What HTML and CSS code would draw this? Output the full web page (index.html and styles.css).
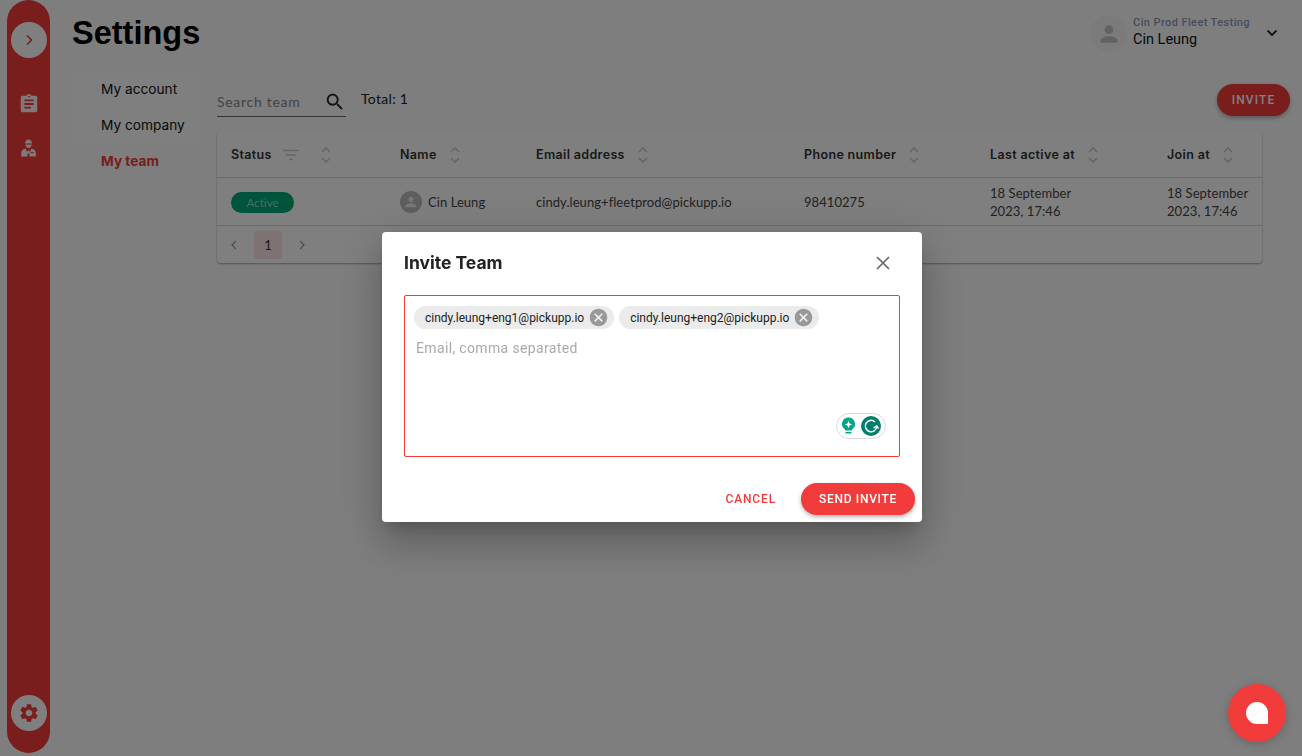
FILE: index.html
```html
<!DOCTYPE html>
<html lang="en">
<head>
    <meta charset="UTF-8">
    <meta name="viewport" content="width=device-width, initial-scale=1.0">
    <title>Settings</title>
    <link rel="stylesheet" href="styles.css">
</head>
<body>
    <svg class="defs" width="0" height="0">
        <symbol id="sort" viewBox="0 0 12 18">
            <path d="M2 6l4-4 4 4M2 12l4 4 4-4" fill="none" stroke="currentColor" stroke-width="1.6"/>
        </symbol>
        <symbol id="cancel" viewBox="0 0 24 24">
            <path d="M12 2C6.47 2 2 6.47 2 12s4.47 10 10 10 10-4.47 10-10S17.53 2 12 2zm5 13.59L15.59 17 12 13.41 8.41 17 7 15.59 10.59 12 7 8.41 8.41 7 12 10.59 15.59 7 17 8.41 13.41 12 17 15.59z" fill="currentColor"/>
        </symbol>
        <symbol id="person" viewBox="0 0 24 24">
            <path d="M12 12c2.21 0 4-1.79 4-4s-1.79-4-4-4-4 1.79-4 4 1.79 4 4 4zm0 2c-2.67 0-8 1.34-8 4v2h16v-2c0-2.66-5.33-4-8-4z" fill="currentColor"/>
        </symbol>
    </svg>

    <div class="page">
        <aside class="sidebar">
            <button class="side-btn">
                <svg width="12" height="12" viewBox="0 0 12 12"><path d="M4 1.5L8.5 6 4 10.5" fill="none" stroke="currentColor" stroke-width="1.6"/></svg>
            </button>
            <svg class="side-icon" width="22" height="22" viewBox="0 0 24 24"><path d="M19 3h-4.18C14.4 1.84 13.3 1 12 1c-1.3 0-2.4.84-2.82 2H5c-1.1 0-2 .9-2 2v14c0 1.1.9 2 2 2h14c1.1 0 2-.9 2-2V5c0-1.1-.9-2-2-2zm-7 0c.55 0 1 .45 1 1s-.45 1-1 1-1-.45-1-1 .45-1 1-1zm2 14H7v-2h7v2zm3-4H7v-2h10v2zm0-4H7V7h10v2z" fill="currentColor"/></svg>
            <svg class="side-icon worker" width="15" height="18" viewBox="0 0 15 18"><path d="M4 4.600C4 2.300 5.500.6 7.500.6S11 2.300 11 4.600zM4.400 5.500h6.200c-.1 2-1.300 3.500-3.100 3.500S4.500 7.500 4.400 5.500zM4.600 9.500l1.400 3.500 1.500-2 1.500 2 1.400-3.500c2.300.5 4 1.800 4.300 3.800l.3 4.200H8.500v-3H6.500v3H0l.3-4.200c.3-2 2-3.300 4.300-3.800z" fill="currentColor"/><path d="M9.500 13.600h3.200" stroke="#f23b3b" stroke-width="1"/></svg>
            <button class="side-btn side-bottom">
                <svg width="22" height="22" viewBox="0 0 24 24"><path d="M19.14 12.940c.04-.3.06-.61.06-.94 0-.32-.02-.64-.07-.94l2.030-1.580c.18-.14.23-.41.12-.61l-1.920-3.320c-.12-.22-.37-.29-.59-.22l-2.390.96c-.5-.38-1.030-.7-1.620-.94l-.36-2.540c-.04-.24-.24-.41-.48-.41h-3.840c-.24 0-.43.17-.47.41l-.36 2.540c-.59.24-1.130.57-1.620.94l-2.390-.96c-.22-.08-.47 0-.59.22L2.740 8.870c-.12.21-.08.47.12.61l2.030 1.580c-.05.3-.09.63-.09.94s.02.64.07.94l-2.030 1.580c-.18.14-.23.41-.12.61l1.920 3.320c.12.22.37.29.59.22l2.390-.96c.5.38 1.030.7 1.620.94l.36 2.540c.05.24.24.41.48.41h3.840c.24 0 .44-.17.47-.41l.36-2.540c.59-.24 1.130-.56 1.620-.94l2.390.96c.22.08.47 0 .59-.22l1.920-3.320c.12-.22.07-.47-.12-.61l-2.010-1.580zM12 15.600c-1.980 0-3.600-1.620-3.600-3.600s1.620-3.600 3.600-3.600 3.600 1.620 3.600 3.600-1.620 3.600-3.600 3.600z" fill="currentColor"/></svg>
            </button>
        </aside>

        <main class="main">
            <header class="topbar">
                <h1>Settings</h1>
                <div class="user">
                    <span class="user-avatar"><svg width="26" height="26"><use href="#person"/></svg></span>
                    <div class="user-text">
                        <div class="user-org">Cin Prod Fleet Testing</div>
                        <div class="user-name">Cin Leung</div>
                    </div>
                    <svg class="user-caret" width="12" height="8" viewBox="0 0 12 8"><path d="M1.500 1.500L6 6l4.500-4.500" fill="none" stroke="currentColor" stroke-width="1.700"/></svg>
                </div>
            </header>

            <div class="body">
                <nav class="menu">
                    <a class="menu-item">My account</a>
                    <a class="menu-item">My company</a>
                    <a class="menu-item active">My team</a>
                </nav>

                <section class="content">
                    <div class="toolbar">
                        <div class="search">
                            <span>Search team</span>
                            <svg width="22" height="22" viewBox="0 0 24 24"><path d="M15.500 14h-.79l-.28-.27C15.410 12.590 16 11.110 16 9.500 16 5.910 13.090 3 9.500 3S3 5.910 3 9.500 5.910 16 9.500 16c1.610 0 3.090-.59 4.230-1.570l.27.28v.79l5 4.990L20.490 19l-4.990-5zm-6 0C7.010 14 5 11.990 5 9.500S7.010 5 9.500 5 14 7.010 14 9.500 11.990 14 9.500 14z" fill="currentColor"/></svg>
                        </div>
                        <span class="total">Total: 1</span>
                        <button class="btn-invite">INVITE</button>
                    </div>

                    <div class="card">
                        <div class="row head">
                            <div class="th">Status
                                <svg class="filter" width="18" height="12" viewBox="0 0 18 12"><path d="M1 1.500h16M4 6h10M7 10.500h4" stroke="currentColor" stroke-width="1.500"/></svg>
                                <svg class="sort sort-status" width="12" height="18"><use href="#sort"/></svg>
                            </div>
                            <div class="th">Name <svg class="sort" width="12" height="18"><use href="#sort"/></svg></div>
                            <div class="th">Email address <svg class="sort" width="12" height="18"><use href="#sort"/></svg></div>
                            <div class="th">Phone number <svg class="sort" width="12" height="18"><use href="#sort"/></svg></div>
                            <div class="th">Last active at <svg class="sort" width="12" height="18"><use href="#sort"/></svg></div>
                            <div class="th">Join at <svg class="sort" width="12" height="18"><use href="#sort"/></svg></div>
                        </div>
                        <div class="row cells">
                            <div><span class="badge">Active</span></div>
                            <div class="name-cell">
                                <span class="row-avatar"><svg width="16" height="16"><use href="#person"/></svg></span>
                                Cin Leung
                            </div>
                            <div>cindy.leung+fleetprod@pickupp.io</div>
                            <div>98410275</div>
                            <div>18 September<br>2023, 17:46</div>
                            <div>18 September<br>2023, 17:46</div>
                        </div>
                        <div class="pager">
                            <svg width="10" height="10" viewBox="0 0 10 10"><path d="M7 1L3 5l4 4" fill="none" stroke="currentColor" stroke-width="1.200"/></svg>
                            <span class="page-num">1</span>
                            <svg width="10" height="10" viewBox="0 0 10 10"><path d="M3 1l4 4-4 4" fill="none" stroke="currentColor" stroke-width="1.200"/></svg>
                        </div>
                    </div>
                </section>
            </div>
        </main>
    </div>

    <div class="overlay">
        <div class="dialog">
            <div class="dialog-title">
                <h2>Invite Team</h2>
                <svg width="14" height="14" viewBox="0 0 14 14"><path d="M1 1l12 12M13 1L1 13" stroke="currentColor" stroke-width="1.700"/></svg>
            </div>
            <div class="email-box">
                <div class="chips">
                    <span class="chip">cindy.leung+eng1@pickupp.io <svg width="21" height="21"><use href="#cancel"/></svg></span>
                    <span class="chip">cindy.leung+eng2@pickupp.io <svg width="21" height="21"><use href="#cancel"/></svg></span>
                </div>
                <div class="placeholder">Email, comma separated</div>
                <div class="grammarly">
                    <svg width="15" height="18" viewBox="0 0 15 18"><path d="M7.500 0.500a6.500 6.500 0 0 1 3.500 12v1H4v-1a6.500 6.500 0 0 1 3.500-12z" fill="#00a88a"/><path d="M4.500 15h6v1.500h-6z" fill="#00a88a"/><path d="M7.500 3.800l1 2.700 2.700 1-2.700 1-1 2.700-1-2.700-2.700-1 2.700-1z" fill="#fff"/></svg>
                    <svg width="20" height="20" viewBox="0 0 20 20"><circle cx="10" cy="10" r="10" fill="#027e6f"/><path d="M14 6A5.700 5.700 0 1 0 15.700 10.500" fill="none" stroke="#fff" stroke-width="1.500"/><path d="M12.500 12l3.300-2.200 1.800 2.800" fill="none" stroke="#fff" stroke-width="1.300"/></svg>
                </div>
            </div>
            <div class="dialog-actions">
                <button class="btn-cancel">CANCEL</button>
                <button class="btn-send">SEND INVITE</button>
            </div>
        </div>
    </div>

    <button class="chat-fab"><span class="chat-drop"></span></button>
</body>
</html>
```

FILE: styles.css
```css
* {
    box-sizing: border-box;
}
html, body {
    margin: 0;
    height: 100%;
    overflow: hidden;
}
body {
    font-family: "Inter", "Liberation Sans", sans-serif;
    background-color: #fff;
    color: #000;
}
button {
    border: none;
    cursor: pointer;
    font-family: "Roboto", sans-serif;
}
.defs {
    position: absolute;
}

/* page under the overlay */
.page {
    display: flex;
    height: 756px;
    padding-left: 7px;
    background-color: #fcfcfc;
}
.sidebar {
    width: 43px;
    height: 753px;
    flex-shrink: 0;
    display: flex;
    flex-direction: column;
    align-items: center;
    padding: 22px 0;
    border-radius: 22px;
    background-color: #f23b3b;
    color: #fff;
}
.side-btn {
    width: 36px;
    height: 36px;
    padding: 0;
    display: flex;
    align-items: center;
    justify-content: center;
    border-radius: 50%;
    background-color: #fff;
    color: #f23b3b;
}
.side-icon {
    margin-top: 35px;
    color: #fff;
    opacity: .95;
}
.side-icon.worker {
    margin-top: 24px;
}
.side-bottom {
    margin-top: auto;
}
.main {
    flex: 1;
    padding: 0 12px 0 22px;
}
.topbar {
    height: 72px;
    display: flex;
    align-items: center;
    justify-content: space-between;
}
h1 {
    margin: 0 0 6px;
    font-family: "Liberation Sans", sans-serif;
    font-size: 32.500px;
    font-weight: 700;
}
.user {
    display: flex;
    align-items: center;
    margin: 0 12px 6px 0;
}
.user-avatar {
    width: 37px;
    height: 37px;
    margin-top: 1px;
    display: flex;
    align-items: center;
    justify-content: center;
    border-radius: 50%;
    background-color: #f7f7f7;
    color: #c4c4c4;
}
.user-text {
    margin-left: 6px;
    font-family: "Roboto", sans-serif;
}
.user-org {
    font-size: 11px;
    font-weight: 500;
    line-height: 14px;
    letter-spacing: .4px;
    color: #8e9cb8;
}
.user-name {
    font-size: 14.500px;
    line-height: 20px;
    color: #111;
}
.user-caret {
    margin-left: 16px;
}
.body {
    display: flex;
    gap: 18px;
}
.menu {
    width: 127px;
    height: 72px;
    flex-shrink: 0;
    background-color: #fff;
}
.menu-item {
    display: block;
    height: 36px;
    padding-left: 29px;
    font-size: 13.700px;
    line-height: 34px;
    color: #111;
}
.menu-item.active {
    font-weight: 700;
    color: #f23b3b;
}
.content {
    flex: 1;
}
.toolbar {
    height: 60px;
    padding-top: 12px;
    display: flex;
    align-items: flex-start;
}
.search {
    width: 129px;
    height: 33px;
    padding-top: 3px;
    display: flex;
    align-items: center;
    justify-content: space-between;
    border-bottom: 1px solid #666;
    font-family: "Lato", sans-serif;
    font-size: 14px;
    letter-spacing: .7px;
    color: #888;
}
.search svg {
    color: #222;
}
.total {
    margin: 6px 0 0 15px;
    font-family: "Lato", sans-serif;
    font-size: 14px;
    letter-spacing: .3px;
    color: #222;
}
.btn-invite {
    width: 73px;
    height: 32px;
    margin-left: auto;
    border-radius: 16px;
    background-color: #f23b3b;
    color: #fff;
    font-size: 12px;
    font-weight: 500;
    letter-spacing: 1.100px;
    box-shadow: 0 2px 4px rgba(0, 0, 0, .3);
}
.card {
    margin-right: 28px;
    border-radius: 4px;
    background-color: #fff;
    box-shadow: 0 1px 2px rgba(0, 0, 0, .35);
}
.row {
    display: grid;
    grid-template-columns: 169px 136px 268px 186px 177px 1fr;
    padding-left: 14px;
    align-items: center;
    border-bottom: 1px solid #d8d8d8;
}
.head {
    height: 46px;
}
.cells {
    height: 48px;
    padding-top: 1px;
    font-family: "Lato", sans-serif;
    font-size: 13px;
    line-height: 18px;
    letter-spacing: .06px;
    color: #444;
}
.th {
    display: flex;
    align-items: center;
    font-size: 12.500px;
    font-weight: 600;
    letter-spacing: .35px;
    color: #333;
}
.sort {
    margin-left: 12px;
    color: #ccc;
}
.filter {
    margin-left: 10px;
    color: #ccc;
}
.sort-status {
    margin-left: 20px;
}
.badge {
    display: inline-block;
    width: 63px;
    height: 21px;
    border-radius: 11px;
    background-color: #00a878;
    color: #8fdcc0;
    font-size: 11.500px;
    line-height: 21px;
    text-align: center;
    vertical-align: middle;
}
.name-cell {
    display: flex;
    align-items: center;
    gap: 6px;
}
.row-avatar {
    width: 22px;
    height: 22px;
    display: flex;
    align-items: center;
    justify-content: center;
    border-radius: 50%;
    background-color: #bdbdbd;
    color: #eee;
}
.pager {
    height: 37px;
    padding-left: 12px;
    display: flex;
    align-items: center;
    gap: 15px;
    color: #999;
}
.page-num {
    width: 28px;
    height: 28px;
    border-radius: 3px;
    background-color: #ffe4e4;
    color: #333;
    font-family: "Lato", sans-serif;
    font-size: 13px;
    line-height: 28px;
    text-align: center;
}

/* dialog */
.overlay {
    position: fixed;
    inset: 0;
    display: flex;
    align-items: center;
    justify-content: center;
    padding: 0 0 2px 2px;
    background-color: rgba(0, 0, 0, .5);
}
.dialog {
    width: 540px;
    height: 290px;
    padding: 0 7px 0 22px;
    border-radius: 4px;
    background-color: #fff;
    box-shadow: 0 11px 15px -7px rgba(0, 0, 0, .2), 0 24px 38px 3px rgba(0, 0, 0, .14), 0 9px 46px 8px rgba(0, 0, 0, .12);
}
.dialog-title {
    height: 63px;
    padding: 0 25px 2px 0;
    display: flex;
    align-items: center;
    justify-content: space-between;
    color: #666;
}
h2 {
    margin: 0;
    font-size: 17.500px;
    font-weight: 700;
    color: #222;
}
.email-box {
    position: relative;
    width: 496px;
    height: 162px;
    padding: 10px 9px;
    border: 1px solid #f23b3b;
    border-radius: 2px;
}
.chips {
    display: flex;
    gap: 5px;
}
.chip {
    height: 23px;
    padding: 0 5px 0 11px;
    display: flex;
    align-items: center;
    gap: 4px;
    border-radius: 12px;
    background-color: #ebebeb;
    color: #222;
    font-family: "Roboto", sans-serif;
    font-size: 12px;
}
.chip svg {
    color: #999;
}
.placeholder {
    margin: 11px 0 0 2px;
    font-family: "Roboto", sans-serif;
    font-size: 14px;
    line-height: 16px;
    letter-spacing: .35px;
    color: #aaa;
}
.grammarly {
    position: absolute;
    right: 13px;
    bottom: 17px;
    width: 50px;
    height: 26px;
    display: flex;
    align-items: center;
    justify-content: center;
    gap: 5px;
    border: 1px solid #d5d9e0;
    border-radius: 13px;
    background-color: #fff;
}
.dialog-actions {
    margin-top: 26px;
    display: flex;
    align-items: center;
    justify-content: flex-end;
}
.btn-cancel {
    padding: 0;
    margin-right: 25px;
    background: none;
    color: #f23b3b;
    font-size: 12px;
    font-weight: 500;
    letter-spacing: .85px;
}
.btn-send {
    width: 114px;
    height: 32px;
    border-radius: 16px;
    background-color: #f23b3b;
    color: #fff;
    font-size: 12px;
    font-weight: 500;
    letter-spacing: .7px;
    box-shadow: 0 2px 4px rgba(0, 0, 0, .3);
}
.chat-fab {
    position: fixed;
    right: 16px;
    bottom: 14px;
    width: 58px;
    height: 58px;
    padding: 0;
    display: flex;
    align-items: center;
    justify-content: center;
    border-radius: 50%;
    background-color: #f23b3b;
    box-shadow: 0 2px 10px rgba(0, 0, 0, .2);
}
.chat-drop {
    width: 22px;
    height: 22px;
    border-radius: 11px 11px 0 11px;
    background-color: #fff;
}
```
